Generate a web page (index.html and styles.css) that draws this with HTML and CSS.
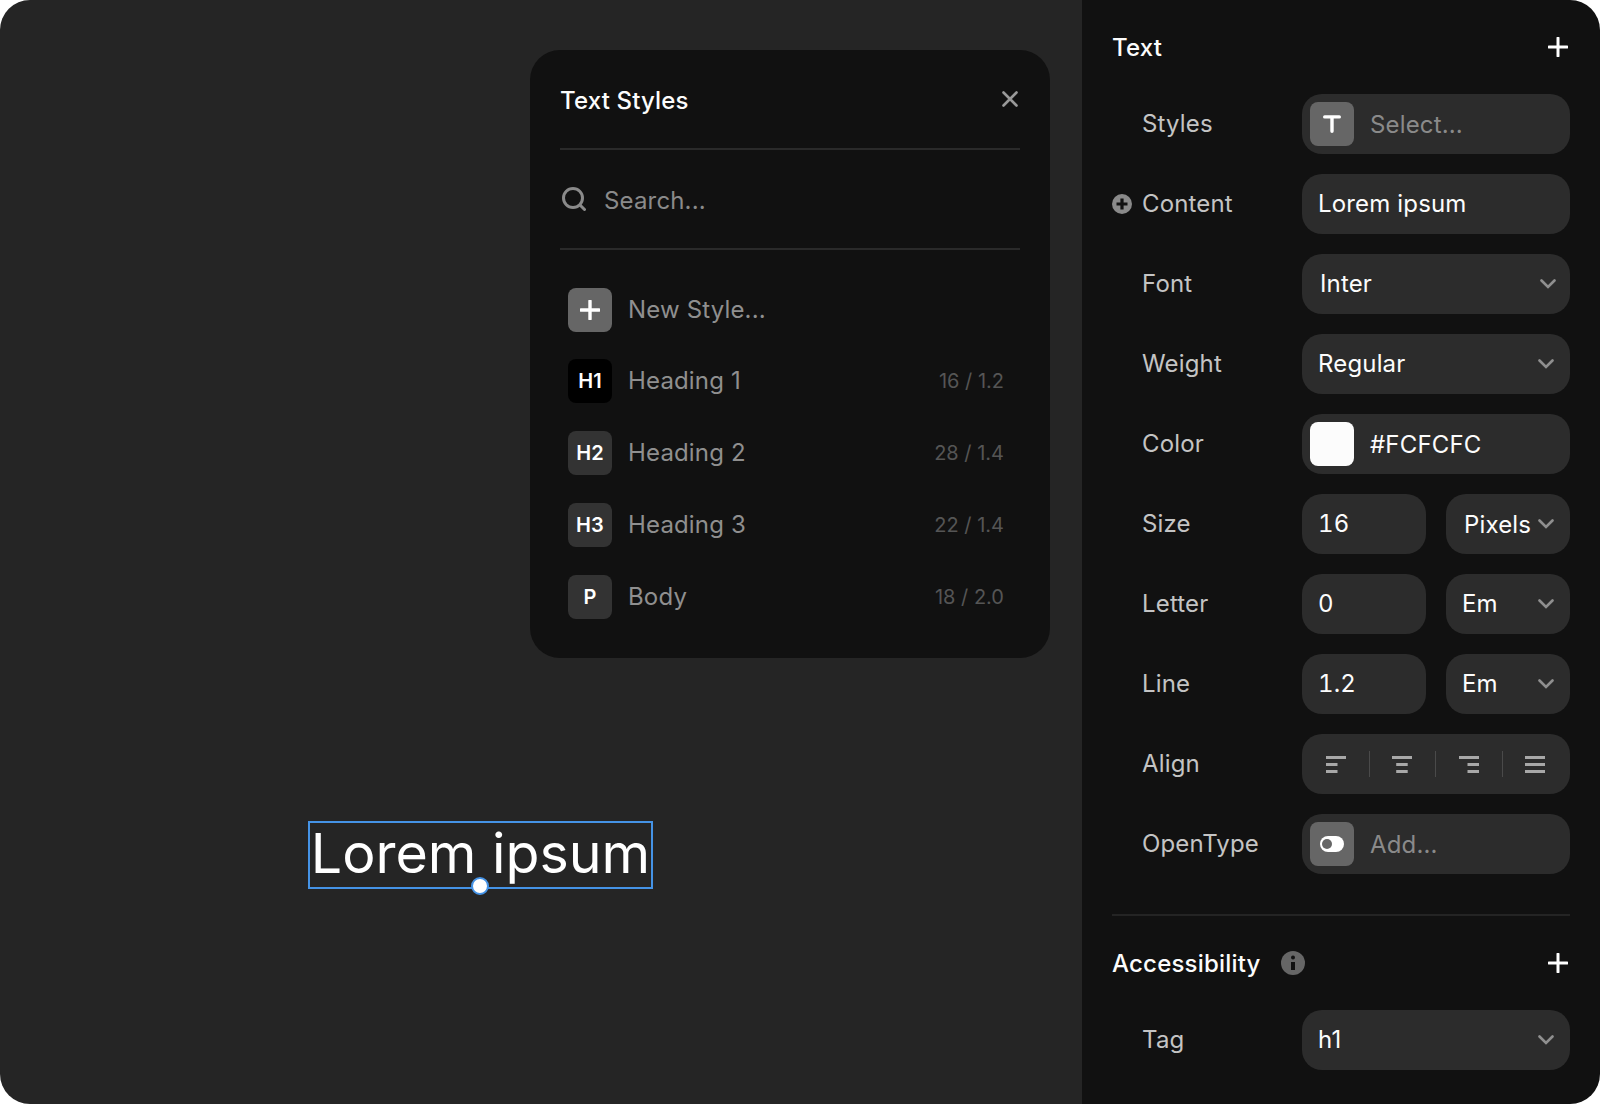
FILE: index.html
```html
<!DOCTYPE html>
<html lang="en">
<head>
<meta charset="utf-8">
<title>Text Styles</title>
<link rel="stylesheet" href="styles.css">
</head>
<body>
<div class="app">
  <main class="canvas">
    <section class="popover">
      <header class="pop-head">
        <h2 class="pop-title">Text Styles</h2>
        <svg class="pop-close" viewBox="0 0 16 16"><path d="M1.500 1.500l13 13M14.500 1.500l-13 13"/></svg>
      </header>
      <div class="pop-search">
        <svg class="search-icon" viewBox="0 0 24 24"><circle cx="11" cy="11" r="9.500"/><path d="M18 18l4.500 4.500"/></svg>
        <span class="search-text">Search...</span>
      </div>
      <ul class="style-list">
        <li class="style-row first">
          <span class="badge badge-new"><svg class="badge-plus" viewBox="0 0 20 20"><path d="M10 1v18M1 10h18"/></svg></span>
          <span class="style-name">New Style...</span>
        </li>
        <li class="style-row">
          <span class="badge badge-black">H1</span>
          <span class="style-name">Heading 1</span>
          <span class="style-meta">16 / 1.2</span>
        </li>
        <li class="style-row">
          <span class="badge">H2</span>
          <span class="style-name">Heading 2</span>
          <span class="style-meta">28 / 1.4</span>
        </li>
        <li class="style-row">
          <span class="badge">H3</span>
          <span class="style-name">Heading 3</span>
          <span class="style-meta">22 / 1.4</span>
        </li>
        <li class="style-row">
          <span class="badge">P</span>
          <span class="style-name">Body</span>
          <span class="style-meta">18 / 2.0</span>
        </li>
      </ul>
    </section>
    <div class="selection">
      <span class="selection-text">Lorem ipsum</span>
      <span class="selection-handle"></span>
    </div>
  </main>

  <aside class="panel">
    <header class="panel-head">
      <h2 class="panel-title">Text</h2>
      <svg class="add" viewBox="0 0 20 20"><path d="M10 1v18M1 10h18"/></svg>
    </header>
    <div class="rows">
      <div class="row">
        <span class="label">Styles</span>
        <div class="field field-icon">
          <span class="tile"><svg class="tile-t" viewBox="0 0 18 18"><path d="M1.700 1.900h14.600M9 1.900v14.400"/></svg></span>
          <span class="muted">Select...</span>
        </div>
      </div>
      <div class="row">
        <svg class="label-plus" viewBox="0 0 20 20"><circle cx="10" cy="10" r="10"/><path d="M10 4.500v11M4.500 10h11"/></svg>
        <span class="label">Content</span>
        <div class="field field-text">Lorem ipsum</div>
      </div>
      <div class="row">
        <span class="label">Font</span>
        <div class="field field-text field-wide">Inter
          <svg class="chev chev-wide" viewBox="0 0 16 10"><path d="M1.500 1.500L8 8l6.500-6.500"/></svg>
        </div>
      </div>
      <div class="row">
        <span class="label">Weight</span>
        <div class="field field-text">Regular
          <svg class="chev" viewBox="0 0 16 10"><path d="M1.500 1.500L8 8l6.500-6.500"/></svg>
        </div>
      </div>
      <div class="row">
        <span class="label">Color</span>
        <div class="field field-icon">
          <span class="tile tile-swatch"></span>
          <span>#FCFCFC</span>
        </div>
      </div>
      <div class="row">
        <span class="label">Size</span>
        <div class="pair">
          <div class="field field-text field-num">16</div>
          <div class="field field-text field-wide field-flush">Pixels
            <svg class="chev" viewBox="0 0 16 10"><path d="M1.500 1.500L8 8l6.500-6.500"/></svg>
          </div>
        </div>
      </div>
      <div class="row">
        <span class="label">Letter</span>
        <div class="pair">
          <div class="field field-text field-num">0</div>
          <div class="field field-text">Em
            <svg class="chev" viewBox="0 0 16 10"><path d="M1.500 1.500L8 8l6.500-6.500"/></svg>
          </div>
        </div>
      </div>
      <div class="row">
        <span class="label">Line</span>
        <div class="pair">
          <div class="field field-text field-num">1.2</div>
          <div class="field field-text">Em
            <svg class="chev" viewBox="0 0 16 10"><path d="M1.500 1.500L8 8l6.500-6.500"/></svg>
          </div>
        </div>
      </div>
      <div class="row">
        <span class="label">Align</span>
        <div class="field field-segments">
          <span class="segment"><svg class="align" viewBox="0 0 20 17"><path d="M0 1.500h20M0 8.500h11.500M0 15.500h11.500"/></svg></span>
          <span class="segment"><svg class="align" viewBox="0 0 20 17"><path d="M0 1.500h20M4.200 8.500h11.500M4.200 15.500h11.500"/></svg></span>
          <span class="segment"><svg class="align" viewBox="0 0 20 17"><path d="M0 1.500h20M8.500 8.500h11.500M8.500 15.500h11.500"/></svg></span>
          <span class="segment"><svg class="align" viewBox="0 0 20 17"><path d="M0 1.500h20M0 8.500h20M0 15.500h20"/></svg></span>
        </div>
      </div>
      <div class="row">
        <span class="label">OpenType</span>
        <div class="field field-icon">
          <span class="tile"><svg class="tile-toggle" viewBox="0 0 24 16"><rect width="24" height="16" rx="8" fill="#fff"/><circle cx="7" cy="8" r="5" fill="#666"/></svg></span>
          <span class="muted">Add...</span>
        </div>
      </div>
    </div>
    <hr class="panel-rule">
    <header class="panel-head panel-head-second">
      <h2 class="panel-title">Accessibility</h2>
      <svg class="info" viewBox="0 0 24 24"><circle cx="12" cy="12" r="12"/><circle class="info-dot" cx="12" cy="6.500" r="2"/><path class="info-bar" d="M12 11v8"/></svg>
      <svg class="add" viewBox="0 0 20 20"><path d="M10 1v18M1 10h18"/></svg>
    </header>
    <div class="rows">
      <div class="row">
        <span class="label">Tag</span>
        <div class="field field-text">h1
          <svg class="chev" viewBox="0 0 16 10"><path d="M1.500 1.500L8 8l6.500-6.500"/></svg>
        </div>
      </div>
    </div>
  </aside>
</div>
</body>
</html>
```

FILE: styles.css
```css
* { box-sizing: border-box; }
html, body { margin: 0; padding: 0; background: #fff; }
body { font-family: Inter, "Liberation Sans", sans-serif; font-size: 24px; letter-spacing: 0.16px; color: #fcfcfc; }
h2, ul { margin: 0; padding: 0; }
ul { list-style: none; }

.app {
  width: 1600px;
  height: 1104px;
  display: flex;
  border-radius: 30px;
  overflow: hidden;
}

.canvas { position: relative; flex: 1; background: #252525; }

.popover {
  position: absolute;
  left: 530px;
  top: 50px;
  width: 520px;
  height: 608px;
  padding: 0 30px;
  background: #111;
  border-radius: 30px;
}
.pop-head {
  display: flex;
  align-items: center;
  justify-content: space-between;
  height: 100px;
  border-bottom: 2px solid #2a2a2a;
}
.pop-title { font-size: 24px; font-weight: 500; letter-spacing: 0.16px; line-height: 100px; padding-top: 4px; }
.pop-close { width: 16px; height: 16px; margin-right: 2px; fill: none; stroke: #999; stroke-width: 2.6; stroke-linecap: round; }
.pop-search {
  display: flex;
  align-items: center;
  gap: 18px;
  height: 100px;
  padding-left: 2px;
  border-bottom: 2px solid #2a2a2a;
  color: #8a8a8a;
}
.search-text { padding-top: 2px; }
.search-icon { width: 24px; height: 24px; fill: none; stroke: #8a8a8a; stroke-width: 3; stroke-linecap: round; }

.style-list { display: flex; flex-direction: column; gap: 28px; padding: 38px 16px 0 8px; }
.style-row { display: flex; align-items: center; gap: 16px; height: 44px; }
.style-row.first { margin-bottom: -1px; }
.badge {
  display: flex;
  align-items: center;
  justify-content: center;
  width: 44px;
  height: 44px;
  border-radius: 8px;
  background: #333;
  color: #fff;
  font-size: 20px;
  font-weight: 600;
}
.badge-new { background: #666; }
.badge-black { background: #000; }
.badge-plus { width: 20px; height: 20px; fill: none; stroke: #fff; stroke-width: 3.4; stroke-linecap: round; }
.style-name { flex: 1; color: #8f8f8f; padding-bottom: 2px; }
.style-meta { color: #555; font-size: 20px; letter-spacing: 0; }

.selection {
  position: absolute;
  left: 308px;
  top: 821px;
  width: 345px;
  height: 68px;
  border: 2px solid #4593e6;
  display: flex;
  align-items: center;
  justify-content: center;
}
.selection-text { color: #fff; font-size: 55.5px; letter-spacing: 0; line-height: 64px; padding-bottom: 5px; white-space: nowrap; }
.selection-handle {
  position: absolute;
  left: 160.5px;
  top: 54px;
  width: 18px;
  height: 18px;
  border-radius: 50%;
  background: #fff;
  border: 2px solid #4593e6;
}

.panel { width: 518px; padding: 0 30px; background: #111; }
.panel-head { display: flex; align-items: center; justify-content: space-between; height: 94px; }
.panel-title { font-size: 24px; font-weight: 500; letter-spacing: 0.2px; }
.add { width: 20px; height: 20px; margin-right: 2.5px; fill: none; stroke: #fff; stroke-width: 3; stroke-linecap: round; }

.rows { display: flex; flex-direction: column; gap: 20px; }
.row { position: relative; display: flex; align-items: center; height: 60px; padding-left: 30px; }
.label { width: 160px; color: #c4c4c4; flex: none; padding-bottom: 2px; }
.label-plus { position: absolute; left: 0; top: 20px; width: 20px; height: 20px; fill: #8a8a8a; }
.label-plus path { fill: none; stroke: #111; stroke-width: 3.2; }

.field {
  display: flex;
  align-items: center;
  flex: 1;
  min-width: 0;
  height: 60px;
  background: #2c2c2c;
  border-radius: 20px;
  white-space: nowrap;
}
.field-icon { gap: 16px; padding-left: 8px; }
.field-text { justify-content: space-between; padding: 0 16px 2px 16px; }
.field-wide { padding-left: 18px; }
.field-flush { padding-bottom: 0; }
.field-num { font-variant-numeric: tabular-nums; }
.field-segments { display: grid; grid-template-columns: repeat(4, 1fr); padding-right: 2px; }
.pair { display: grid; grid-template-columns: 1fr 1fr; gap: 20px; flex: 1; }

.tile { display: flex; align-items: center; justify-content: center; width: 44px; height: 44px; border-radius: 8px; background: #666; flex: none; }
.tile-swatch { background: #fcfcfc; }
.tile-t { width: 18px; height: 18px; fill: none; stroke: #fff; stroke-width: 3.4; stroke-linecap: round; }
.tile-toggle { width: 24px; height: 16px; }
.muted { color: #8a8a8a; }

.chev { width: 16px; height: 10px; margin-top: 2px; fill: none; stroke: #8f8f8f; stroke-width: 2.6; stroke-linecap: round; flex: none; }
.field-flush .chev { margin-top: 0; }
.chev-wide { margin-right: -2px; }

.segment { display: flex; align-items: center; justify-content: center; height: 26px; border-left: 1px solid #4a4a4a; }
.segment:first-child { border-left-color: transparent; }
.align { width: 20px; height: 17px; fill: none; stroke: #a8a8a8; stroke-width: 3; }

.panel-rule { margin: 40px 0 0; border: 0; border-top: 2px solid #242424; }
.panel-head-second { justify-content: flex-start; }
.panel-head-second .add { margin-left: auto; }
.info { width: 24px; height: 24px; margin-left: 20px; fill: #666; }
.info-dot { fill: #111; }
.info-bar { fill: none; stroke: #111; stroke-width: 4; }
```
